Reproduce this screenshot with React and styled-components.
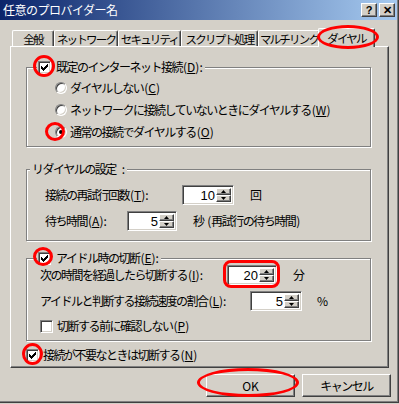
import React from 'react';
import styled, { createGlobalStyle } from 'styled-components';

const Global = createGlobalStyle`
  html, body { margin: 0; padding: 0; background: #d4d0c8; }
  body {
    font-family: "Noto Sans CJK JP", "Noto Sans", sans-serif;
    font-size: 12px;
    line-height: 14px;
    letter-spacing: -1.5px;
  }
`;

const Window = styled.div`
  position: relative;
  width: 399px;
  height: 403px;
  background: #d4d0c8;
  box-shadow: inset -1px -1px #404040, inset -2px -2px #808080;
  display: flex;
  flex-direction: column;
  color: #000;
  overflow: hidden;
`;

const TitleBar = styled.div`
  height: 20px;
  margin-right: 2px;
  padding: 0 2px 0 3px;
  background: linear-gradient(to right, #0a246a, #a6caf0);
  display: flex;
  align-items: center;
  justify-content: space-between;
  color: #fff;
  font-size: 12px;
  letter-spacing: -0.5px;
`;

const CaptionButtons = styled.div`
  display: flex;
  gap: 2px;
`;

const CaptionButton = styled.div`
  width: 16px;
  height: 14px;
  box-sizing: border-box;
  background: #d4d0c8;
  border-top: 1px solid #fff;
  border-left: 1px solid #fff;
  border-right: 1px solid #404040;
  border-bottom: 1px solid #404040;
  box-shadow: inset -1px -1px #808080;
  display: flex;
  align-items: center;
  justify-content: center;
  color: #000;
  font-family: "Liberation Sans", sans-serif;
  font-weight: bold;
  font-size: 11px;
  line-height: 12px;
  letter-spacing: 0;
`;

const TabStrip = styled.div`
  display: flex;
  align-items: flex-end;
  height: 18px;
  margin-top: 8px;
  padding-left: 12px;
`;

const Tab = styled.div`
  position: relative;
  box-sizing: border-box;
  width: ${p => p.$w}px;
  height: ${p => (p.$active ? 19 : 16)}px;
  margin: ${p => (p.$active ? '0 -2px -1px -2px' : '0')};
  z-index: ${p => (p.$active ? 2 : 1)};
  background: #d4d0c8;
  border-top: 1px solid #fff;
  border-left: 1px solid #fff;
  border-right: 1px solid #404040;
  border-radius: 2px 2px 0 0;
  box-shadow: inset -1px 0 #808080;
  display: flex;
  align-items: ${p => (p.$active ? 'flex-start' : 'center')};
  padding-top: ${p => (p.$active ? 2 : 0)}px;
  justify-content: center;
  white-space: nowrap;
  font-size: 11.5px;
  letter-spacing: -1.8px;
`;

const Page = styled.div`
  box-sizing: border-box;
  height: 322px;
  margin: 0 10px;
  border-top: 1px solid #fff;
  border-left: 1px solid #fff;
  border-right: 1px solid #404040;
  border-bottom: 1px solid #404040;
  box-shadow: inset -1px -1px #808080;
  padding: 0 17px 0 15px;
  display: flex;
  flex-direction: column;
`;

const Group = styled.fieldset`
  margin: ${p => p.$top}px 0 0 0;
  padding: 0;
  min-width: 0;
  border: 1px solid #808080;
  box-shadow: inset 1px 1px #fff, 1px 1px #fff;
`;

const GroupBody = styled.div`
  padding: ${p => p.$pad};
  display: flex;
  flex-direction: column;
  gap: ${p => p.$gap || 0}px;
`;

const Legend = styled.legend`
  margin-left: ${p => p.$indent}px;
  padding: 0 2px 0 ${p => p.$padLeft ?? 2}px;
  height: 14px;
  background: #d4d0c8;
  display: flex;
  align-items: center;
  gap: 5px;
  white-space: nowrap;
`;

const Row = styled.div`
  display: flex;
  align-items: center;
  height: ${p => p.$h}px;
  white-space: nowrap;
  gap: ${p => p.$gap ?? 0}px;
`;

const Label = styled.span`
  display: inline-block;
  width: ${p => (p.$w ? `${p.$w}px` : 'auto')};
  flex: none;
`;

const Key = styled.span`
  letter-spacing: 0;
  margin-left: 1px;
`;

const Unit = styled.span`
  margin-left: ${p => p.$gap}px;
`;

const CheckBox = styled.span`
  width: 13px;
  height: 13px;
  box-sizing: border-box;
  flex: none;
  background: #fff;
  border-top: 1px solid #808080;
  border-left: 1px solid #808080;
  border-right: 1px solid #fff;
  border-bottom: 1px solid #fff;
  box-shadow: inset 1px 1px #404040, inset -1px -1px #d4d0c8;
  display: flex;
  align-items: center;
  justify-content: center;
`;

const Radio = styled.span`
  width: 12px;
  height: 12px;
  box-sizing: border-box;
  flex: none;
  border-radius: 50%;
  background: #fff;
  border: 1px solid;
  border-color: #808080 #fff #fff #808080;
  box-shadow: inset 1px 1px #404040, inset -1px -1px #d4d0c8;
  display: flex;
  align-items: center;
  justify-content: center;
  &::after {
    content: '';
    display: ${p => (p.$on ? 'block' : 'none')};
    width: 4px;
    height: 4px;
    border-radius: 50%;
    background: #000;
  }
`;

const RadioRow = styled(Row)`
  gap: 3px;
`;

const Spin = styled.div`
  width: ${p => p.$w}px;
  height: 20px;
  box-sizing: border-box;
  flex: none;
  background: #fff;
  border-top: 1px solid #808080;
  border-left: 1px solid #808080;
  border-right: 1px solid #fff;
  border-bottom: 1px solid #fff;
  box-shadow: inset 1px 1px #404040, inset -1px -1px #d4d0c8;
  display: flex;
  align-items: stretch;
  padding: 2px;
`;

const SpinValue = styled.span`
  flex: 1;
  text-align: right;
  padding-right: 1px;
  font-family: "Liberation Sans", sans-serif;
  font-size: 13px;
  line-height: 16px;
  letter-spacing: 0;
`;

const SpinArrows = styled.div`
  width: 15px;
  display: flex;
  flex-direction: column;
`;

const SpinArrow = styled.div`
  flex: 1;
  box-sizing: border-box;
  background: #d4d0c8;
  border-top: 1px solid #fff;
  border-left: 1px solid #fff;
  border-right: 1px solid #404040;
  border-bottom: 1px solid #404040;
  box-shadow: inset -1px -1px #808080;
  display: flex;
  align-items: center;
  justify-content: center;
`;

const PageCheckRow = styled(Row)`
  margin-top: 6px;
  gap: 4px;
`;

const ButtonRow = styled.div`
  display: flex;
  justify-content: flex-end;
  gap: 7px;
  margin-top: 6px;
  padding-right: 8px;
`;

const PushButton = styled.div`
  width: 89px;
  height: 23px;
  box-sizing: border-box;
  background: #d4d0c8;
  border-top: 1px solid #fff;
  border-left: 1px solid #fff;
  border-right: 1px solid #404040;
  border-bottom: 1px solid #404040;
  box-shadow: inset -1px -1px #808080;
  display: flex;
  align-items: center;
  justify-content: center;
  letter-spacing: ${p => p.$spacing ?? -1.5}px;
`;

const Mark = styled.div`
  position: absolute;
  left: ${p => p.$x}px;
  top: ${p => p.$y}px;
  width: ${p => p.$w}px;
  height: ${p => p.$h}px;
  box-sizing: border-box;
  border: 3px solid #ff0000;
  border-radius: ${p => p.$r || '50%'};
  z-index: 10;
  pointer-events: none;
`;

const Check = () => (
  <svg width="7" height="7" viewBox="0 0 7 7">
    <path d="M0 2h1v1h1v1h1V3h1V2h1V1h1V0h1v3H6v1H5v1H4v1H3v1H2V6H1V5H0z" fill="#000" />
  </svg>
);

const Arrow = ({ down }) => (
  <svg width="5" height="3" viewBox="0 0 5 3">
    <path d={down ? 'M0 0h5L2.5 3z' : 'M2.5 0L5 3H0z'} fill="#000" />
  </svg>
);

const Box = ({ on }) => <CheckBox>{on && <Check />}</CheckBox>;

const Access = ({ k, colon }) => (
  <Key>(<u>{k}</u>){colon ? ':' : ''}</Key>
);

const SpinBox = ({ value, w }) => (
  <Spin $w={w}>
    <SpinValue>{value}</SpinValue>
    <SpinArrows>
      <SpinArrow><Arrow /></SpinArrow>
      <SpinArrow><Arrow down /></SpinArrow>
    </SpinArrows>
  </Spin>
);

const tabs = [
  { label: '全般', w: 42 },
  { label: 'ネットワーク', w: 64 },
  { label: 'セキュリティ', w: 63 },
  { label: 'スクリプト処理', w: 77 },
  { label: 'マルチリンク', w: 62 },
  { label: 'ダイヤル', w: 57, active: true },
];

export default function App() {
  return (
    <>
      <Global />
      <Window>
        <TitleBar>
          <span>任意のプロバイダー名</span>
          <CaptionButtons>
            <CaptionButton>?</CaptionButton>
            <CaptionButton>✕</CaptionButton>
          </CaptionButtons>
        </TitleBar>

        <TabStrip>
          {tabs.map(t => (
            <Tab key={t.label} $w={t.w} $active={t.active}>{t.label}</Tab>
          ))}
        </TabStrip>

        <Page>
          <Group $top={13}>
            <Legend $indent={10} $padLeft={1}>
              <Box on />
              <span>既定のインターネット接続<Access k="D" colon /></span>
            </Legend>
            <GroupBody $pad="3px 0 3px 28px">
              <RadioRow $h={22}>
                <Radio />
                <span>ダイヤルしない<Access k="C" /></span>
              </RadioRow>
              <RadioRow $h={22}>
                <Radio />
                <span>ネットワークに接続していないときにダイヤルする<Access k="W" /></span>
              </RadioRow>
              <RadioRow $h={22}>
                <Radio $on />
                <span>通常の接続でダイヤルする<Access k="O" /></span>
              </RadioRow>
            </GroupBody>
          </Group>

          <Group $top={15}>
            <Legend $indent={3}>リダイヤルの設定<Key> :</Key></Legend>
            <GroupBody $pad="6px 0 6px 18px">
              <Row $h={26}>
                <Label $w={137}>接続の再試行回数<Access k="T" colon /></Label>
                <SpinBox value="10" w={52} />
                <Unit $gap={16}>回</Unit>
              </Row>
              <Row $h={26}>
                <Label $w={82}>待ち時間<Access k="A" colon /></Label>
                <SpinBox value="5" w={50} />
                <Unit $gap={16}>秒<Key> (</Key>再試行の待ち時間<Key>)</Key></Unit>
              </Row>
            </GroupBody>
          </Group>

          <Group $top={10}>
            <Legend $indent={10} $padLeft={1}>
              <Box on />
              <span>アイドル時の切断<Access k="E" colon /></span>
            </Legend>
            <GroupBody $pad="0 0 5px 13px" $gap={6}>
              <Row $h={20}>
                <Label $w={187}>次の時間を経過したら切断する<Access k="I" colon /></Label>
                <SpinBox value="20" w={50} />
                <Unit $gap={16}>分</Unit>
              </Row>
              <Row $h={20}>
                <Label $w={210}>アイドルと判断する接続速度の割合<Access k="L" colon /></Label>
                <SpinBox value="5" w={52} />
                <Unit $gap={15}>%</Unit>
              </Row>
              <Row $h={18} $gap={4}>
                <Box />
                <span>切断する前に確認しない<Access k="P" /></span>
              </Row>
            </GroupBody>
          </Group>

          <PageCheckRow $h={16}>
            <Box on />
            <span>接続が不要なときは切断する<Access k="N" /></span>
          </PageCheckRow>
        </Page>

        <ButtonRow>
          <PushButton $spacing={0}>OK</PushButton>
          <PushButton>キャンセル</PushButton>
        </ButtonRow>

        <Mark $x={317} $y={25} $w={62} $h={24} />
        <Mark $x={33} $y={55} $w={22} $h={22} />
        <Mark $x={45} $y={122} $w={20} $h={19} />
        <Mark $x={33} $y={247} $w={20} $h={19} />
        <Mark $x={223} $y={260} $w={57} $h={28} $r="8px" />
        <Mark $x={22} $y={343} $w={21} $h={22} />
        <Mark $x={197} $y={368} $w={102} $h={29} />
      </Window>
    </>
  );
}
